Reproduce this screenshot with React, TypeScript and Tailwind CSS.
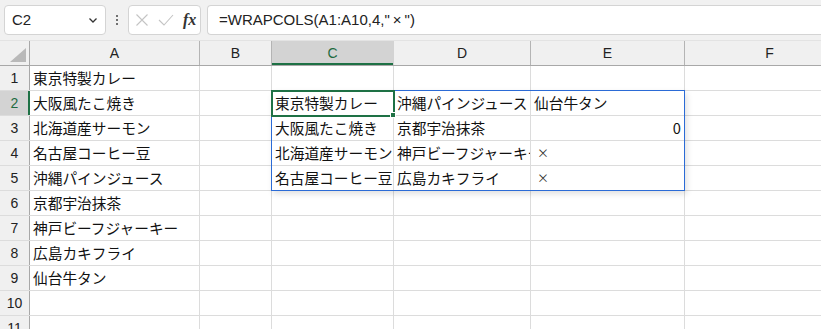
import React from 'react';

type Col = { key: string; w: number };

const cols: Col[] = [
    { key: 'A', w: 170 },
    { key: 'B', w: 72 },
    { key: 'C', w: 122 },
    { key: 'D', w: 137 },
    { key: 'E', w: 154 },
    { key: 'F', w: 170 },
];

// cell contents keyed by "col+row"; right-aligned values get a flag
const cells: Record<string, { text: string; right?: boolean; small?: boolean }> = {
    A1: { text: '東京特製カレー' },
    A2: { text: '大阪風たこ焼き' },
    A3: { text: '北海道産サーモン' },
    A4: { text: '名古屋コーヒー豆' },
    A5: { text: '沖縄パインジュース' },
    A6: { text: '京都宇治抹茶' },
    A7: { text: '神戸ビーフジャーキー' },
    A8: { text: '広島カキフライ' },
    A9: { text: '仙台牛タン' },
    C2: { text: '東京特製カレー' },
    C3: { text: '大阪風たこ焼き' },
    C4: { text: '北海道産サーモン' },
    C5: { text: '名古屋コーヒー豆' },
    D2: { text: '沖縄パインジュース' },
    D3: { text: '京都宇治抹茶' },
    D4: { text: '神戸ビーフジャーキー' },
    D5: { text: '広島カキフライ' },
    E2: { text: '仙台牛タン' },
    E3: { text: '0', right: true },
    E4: { text: '×', small: true },
    E5: { text: '×', small: true },
};

const rows = Array.from({ length: 11 }, (_, i) => i + 1);

const latin = { fontFamily: '"Liberation Sans", Arial, sans-serif' };
const jp = { fontFamily: '"Noto Sans CJK JP", "Noto Sans", sans-serif' };

const Toolbar: React.FC = () => (
    <div className="h-[41px] flex items-center bg-[#f1f1f1] border-b border-[#e3e3e3] pl-1 gap-0" style={latin}>
        <div className="w-[102px] h-[30px] bg-white border border-[#d4d4d4] rounded-[4px] flex items-center justify-between pl-[7px] pr-[6px]">
            <span className="text-[15px] text-[#222]">C2</span>
            <svg width="12" height="12" viewBox="0 0 12 12" fill="none" stroke="#333" strokeWidth="1.3">
                <path d="M2.5 4.5 L6 8 L9.5 4.5" />
            </svg>
        </div>
        <div className="w-[22px] flex flex-col items-center gap-[2px]">
            <span className="w-[2px] h-[2px] bg-[#444] rounded-full" />
            <span className="w-[2px] h-[2px] bg-[#444] rounded-full" />
            <span className="w-[2px] h-[2px] bg-[#444] rounded-full" />
        </div>
        <div className="w-[73px] h-[30px] bg-white border border-[#d4d4d4] rounded-[4px] flex items-center pl-[6px] gap-[9px]">
            <svg width="14" height="14" viewBox="0 0 14 14" fill="none" stroke="#c4c4c4" strokeWidth="1.1">
                <path d="M1.5 1.5 L12.5 12.5 M12.5 1.5 L1.5 12.5" />
            </svg>
            <svg width="16" height="14" viewBox="0 0 16 14" fill="none" stroke="#c4c4c4" strokeWidth="1.1">
                <path d="M1 7 L6 12 L15 2" />
            </svg>
            <span className="text-[16px] italic text-[#333] font-semibold" style={{ fontFamily: '"Liberation Serif", serif' }}>fx</span>
        </div>
        <div className="ml-[6px] flex-1 h-[30px] bg-white border border-[#d4d4d4] rounded-l-[4px] border-r-0 flex items-center pl-[11px]">
            <span className="text-[15px] text-[#222]">=WRAPCOLS(A1:A10,4,"&thinsp;×&thinsp;")</span>
        </div>
    </div>
);

const HeaderRow: React.FC = () => (
    <div className="flex h-[25px] border-b border-[#a8a8a8] bg-[#f0f0f0]" style={latin}>
        <div className="w-[30px] shrink-0 border-r border-[#a8a8a8] relative">
            <svg className="absolute left-[10px] top-[7px]" width="16" height="14" viewBox="0 0 16 14">
                <polygon points="0,14 16,14 16,0" fill="#b9b9b9" />
            </svg>
        </div>
        {cols.map(c => (
            <div
                key={c.key}
                style={{ width: c.w }}
                className={`shrink-0 flex items-center justify-center text-[14px] border-r ${
                    c.key === 'C'
                        ? 'bg-[#d3d3d3] text-[#1e6b41] border-[#d3d3d3] shadow-[inset_0_-2px_0_#1e7145]'
                        : 'text-[#222] border-[#b4b4b4]'
                }`}
            >
                {c.key}
            </div>
        ))}
    </div>
);

const GridRow: React.FC<{ r: number }> = ({ r }) => (
    <div className="flex h-[25px] border-b border-[#dcdcdc]">
        <div
            className={`w-[30px] shrink-0 flex items-center justify-center text-[14px] border-r ${
                r === 2
                    ? 'bg-[#d3d3d3] text-[#1e6b41] border-[#1e7145] shadow-[inset_-1px_0_0_#1e7145]'
                    : 'bg-[#f0f0f0] text-[#222] border-[#a8a8a8]'
            }`}
            style={latin}
        >
            {r}
        </div>
        {cols.map(c => {
            const cell = cells[c.key + r];
            return (
                <div
                    key={c.key}
                    style={{ width: c.w, ...jp }}
                    className={`shrink-0 border-r border-[#dcdcdc] overflow-hidden whitespace-nowrap flex items-center px-[3px] text-[14.7px] text-[#111] ${
                        cell?.right ? 'justify-end' : ''
                    }`}
                >
                    {cell && (cell.small ? <span className="text-[12px] pl-[3px] text-[#333]">{cell.text}</span> : cell.text)}
                </div>
            );
        })}
    </div>
);

export default function App() {
    return (
        <div className="w-[821px] h-[329px] overflow-hidden bg-white">
            <Toolbar />
            <div className="relative">
                <HeaderRow />
                {rows.map(r => (
                    <GridRow key={r} r={r} />
                ))}
                {/* spill range */}
                <div className="absolute left-[271px] top-[49px] w-[414px] h-[101px] border border-[#2b6bd6] shadow-[2px_3px_6px_rgba(0,0,0,0.12)] pointer-events-none" />
                {/* active cell */}
                <div className="absolute left-[271px] top-[49px] w-[124px] h-[27px] border-2 border-[#1e7145] pointer-events-none" />
                <div className="absolute left-[390px] top-[71px] w-[6px] h-[6px] bg-[#1e7145] border border-white pointer-events-none" />
            </div>
        </div>
    );
}
